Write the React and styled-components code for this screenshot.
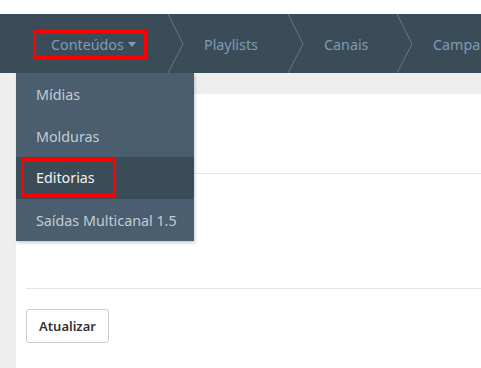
import React from 'react'
import styled, { createGlobalStyle } from 'styled-components'

const GlobalStyle = createGlobalStyle`
  body {
    margin: 0;
    background: #fff;
    font-family: "Noto Sans", "Open Sans", sans-serif;
  }
`

const Page = styled.div`
  padding-top: 14px;
  height: 354px;
  display: flex;
  flex-direction: column;
  overflow: hidden;
`

const NavBar = styled.nav`
  position: relative;
  height: 59px;
  flex-shrink: 0;
  background: #3b4c59;
  display: flex;
  align-items: stretch;
  padding-left: 33px;
`

const NavItem = styled.div`
  box-sizing: border-box;
  display: flex;
  align-items: center;
  padding-left: ${({ $first }) => ($first ? '0' : '20px')};
  padding-top: 1px;
  width: ${({ $w }) => $w}px;
  flex-shrink: 0;
`

const NavLink = styled.span`
  display: inline-flex;
  align-items: center;
  gap: 4px;
  height: 29px;
  box-sizing: border-box;
  color: #7e9bb4;
  font-size: 14.3px;
  white-space: nowrap;
  ${({ $marked }) =>
    $marked &&
    `
    border: 3px solid #ff0000;
    padding: 0 10px 0 15px;
    width: 114px;
  `}
`

const Caret = styled.span`
  width: 0;
  height: 0;
  border-left: 4px solid transparent;
  border-right: 4px solid transparent;
  border-top: 5px solid #7e9bb4;
  margin-top: 1px;
`

const Sep = styled.svg`
  width: 16px;
  height: 59px;
  flex-shrink: 0;
  display: block;
`

const Dropdown = styled.ul`
  position: absolute;
  top: 100%;
  left: 16px;
  width: 178px;
  margin: 0;
  padding: 0;
  list-style: none;
  background: #4a5e70;
  box-shadow: 1px 2px 3px rgba(0, 0, 0, 0.2);
  z-index: 2;
`

const DropItem = styled.li`
  height: 42px;
  display: flex;
  align-items: center;
  padding-left: ${({ $marked }) => ($marked ? '5px' : '20px')};
  padding-top: 1px;
  box-sizing: border-box;
  font-size: 14.3px;
  color: ${({ $active }) => ($active ? '#f2f2f2' : '#c3ccd3')};
  background: ${({ $active }) => ($active ? '#3b4c59' : 'transparent')};
  white-space: nowrap;
`

const Marked = styled.span`
  display: inline-flex;
  align-items: center;
  height: 39px;
  box-sizing: border-box;
  border: 3px solid #ff0000;
  padding: 0 18px 0 12px;
  margin-top: -3px;
`

const Body = styled.div`
  flex: 1;
  background: #eeeeee;
  display: flex;
`

const Content = styled.main`
  flex: 1;
  margin-top: 21px;
  margin-left: 16px;
  background: #fff;
  padding-left: 10px;
`

const Section = styled.div`
  height: ${({ $h }) => $h}px;
  border-bottom: 1px solid #e6e6e6;
`

const Actions = styled.div`
  padding-top: 20px;
`

const Button = styled.button`
  height: 34px;
  width: 83px;
  background: #fff;
  border: 1px solid #cccccc;
  border-radius: 3px;
  font-family: inherit;
  font-size: 13px;
  font-weight: 600;
  color: #333;
`

const Chevron = () => (
  <Sep viewBox="0 0 16 59">
    <polyline points="0,0 15,30 0,59" fill="none" stroke="#66788a" strokeWidth="1" />
  </Sep>
)

const menu = ['Mídias', 'Molduras', 'Editorias', 'Saídas Multicanal 1.5']

const App = () => {
  return (
    <Page>
      <GlobalStyle />
      <NavBar>
        <NavItem $first $w={135}>
          <NavLink $marked>
            Conteúdos <Caret />
          </NavLink>
        </NavItem>
        <Chevron />
        <NavItem $w={104}>
          <NavLink>Playlists</NavLink>
        </NavItem>
        <Chevron />
        <NavItem $w={93}>
          <NavLink>Canais</NavLink>
        </NavItem>
        <Chevron />
        <NavItem $w={120}>
          <NavLink>Campanhas</NavLink>
        </NavItem>
        <Dropdown>
          {menu.map((m) =>
            m === 'Editorias' ? (
              <DropItem key={m} $active $marked>
                <Marked>{m}</Marked>
              </DropItem>
            ) : (
              <DropItem key={m}>{m}</DropItem>
            )
          )}
        </Dropdown>
      </NavBar>
      <Body>
        <Content>
          <Section $h={79} />
          <Section $h={114} />
          <Actions>
            <Button>Atualizar</Button>
          </Actions>
        </Content>
      </Body>
    </Page>
  )
}

export default App
